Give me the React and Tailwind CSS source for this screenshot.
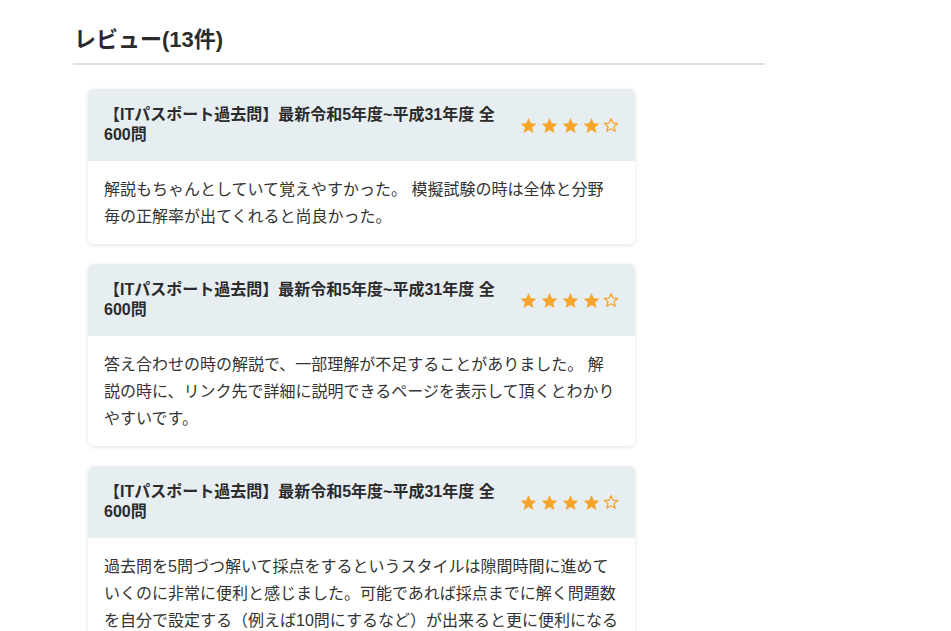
import React from "react";

const reviews = [
  {
    title: "【ITパスポート過去問】最新令和5年度~平成31年度 全600問",
    rating: 4,
    body: "解説もちゃんとしていて覚えやすかった。 模擬試験の時は全体と分野毎の正解率が出てくれると尚良かった。",
  },
  {
    title: "【ITパスポート過去問】最新令和5年度~平成31年度 全600問",
    rating: 4,
    body: "答え合わせの時の解説で、一部理解が不足することがありました。 解説の時に、リンク先で詳細に説明できるページを表示して頂くとわかりやすいです。",
  },
  {
    title: "【ITパスポート過去問】最新令和5年度~平成31年度 全600問",
    rating: 4,
    body: "過去問を5問づつ解いて採点をするというスタイルは隙間時間に進めていくのに非常に便利と感じました。可能であれば採点までに解く問題数を自分で設定する（例えば10問にするなど）が出来ると更に便利になると思います。",
  },
];

const STAR = "M12 2.5l2.9 6.6 7.1.6-5.4 4.7 1.6 7-6.2-3.7-6.2 3.7 1.6-7L2 9.7l7.1-.6z";

function Star({ filled }) {
  if (filled) {
    return (
      <svg width="19" height="19" viewBox="0 0 24 24" className="shrink-0">
        <path d={STAR} fill="#f7a42b" />
      </svg>
    );
  }
  return (
    <svg width="16" height="16" viewBox="0 0 24 24" className="shrink-0">
      <path d={STAR} fill="none" stroke="#f7a42b" strokeWidth="2" strokeLinejoin="round" />
    </svg>
  );
}

function Card({ r }) {
  return (
    <div className="w-[547px] rounded-[6px] bg-white shadow-[0_1px_4px_rgba(0,0,0,0.12)] overflow-hidden">
      <div className="flex items-center gap-4 bg-[#e7eef2] px-4 pt-[16px] pb-[16px]">
        <div className="w-[403px] text-[16px] leading-[20px] font-bold text-[#2b2b2b]">{r.title}</div>
        <div className="ml-auto flex items-center gap-[2px]">
          {[0, 1, 2, 3, 4].map((i) => (
            <Star key={i} filled={i < r.rating} />
          ))}
        </div>
      </div>
      <div className="px-4 pt-[15px] pb-[14px] text-[16px] leading-[27px] text-[#333]">{r.body}</div>
    </div>
  );
}

export default function App() {
  return (
    <div
      className="min-h-screen bg-white"
      style={{ fontFamily: '"Liberation Sans", "Noto Sans CJK JP", sans-serif' }}
    >
      <div className="ml-[73px] w-[692px] pt-[24px]">
        <h2 className="border-b-2 border-[#dde1e5] pb-[7px] pl-[1px] text-[22px] leading-[32px] font-bold text-[#2b2b2b]">
          レビュー(13件)
        </h2>
        <div className="flex flex-col gap-[20px] pl-[15px] pt-[24px]">
          {reviews.map((r, i) => (
            <Card key={i} r={r} />
          ))}
        </div>
      </div>
    </div>
  );
}
